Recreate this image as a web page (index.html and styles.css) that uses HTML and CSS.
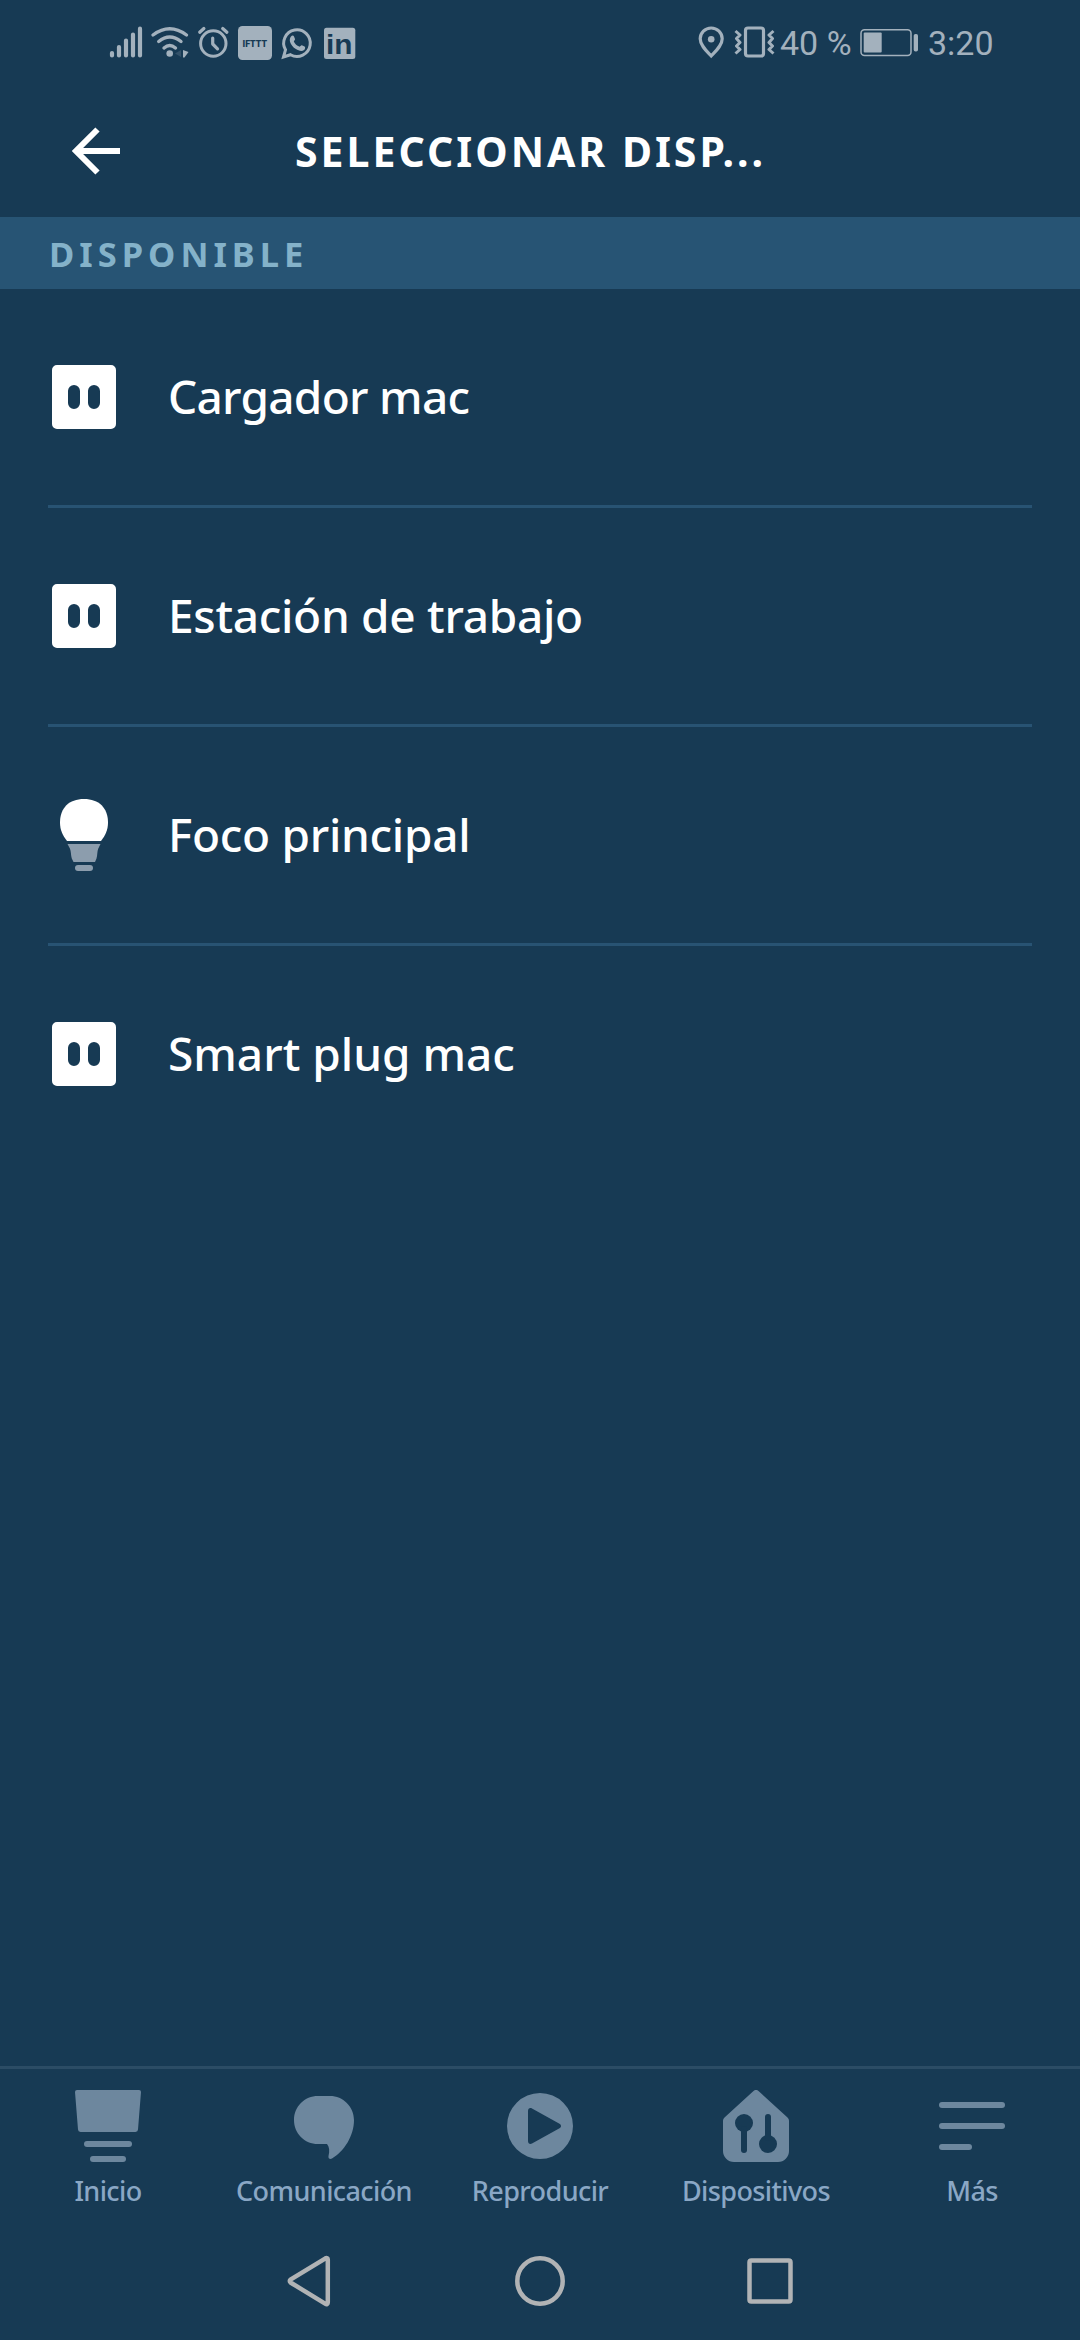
FILE: index.html
```html
<!DOCTYPE html>
<html lang="es">
<head>
<meta charset="utf-8">
<title>Seleccionar dispositivo</title>
<link rel="stylesheet" href="styles.css">
</head>
<body>
<div class="screen">
  <div class="status">
    <svg class="ic signal" width="34" height="34" viewBox="109 26 34 34"><path d="M112 53v2.500M119 47v8.500M126 40.500v15M133 34.500v21M140 28.700v26.800" fill="none" stroke="currentColor" stroke-width="4.200" stroke-linecap="round"/></svg>
    <svg class="ic wifi" width="39" height="34" viewBox="151 26 39 34"><g fill="none" stroke="currentColor" stroke-width="3.400" stroke-linecap="round"><path d="M153 35Q169.700 22.500 186.500 35M158.700 41.500Q169.700 32.500 181 41.500M164 48Q169.700 43 175.500 48"/></g><circle cx="169.700" cy="53.500" r="3.300" fill="currentColor"/><path d="M181 50v7l-6-3.500z" fill="currentColor" opacity=".2"/><path d="M183 50l5.500 2-4 5.500H183z" fill="currentColor"/></svg>
    <svg class="ic alarm" width="32" height="34" viewBox="197 26 32 34"><g fill="none" stroke="currentColor" stroke-width="3.200" stroke-linecap="round"><circle cx="213.300" cy="43.500" r="12.700" stroke-width="3"/><path d="M199.700 32.300l4.200-3.800M222.700 28.500l4.200 3.800"/><path d="M212.700 38v6l4.800 4.800" stroke-linejoin="round"/></g></svg>
    <svg class="ic ifttt" width="34" height="34" viewBox="238 26 34 34"><rect x="238" y="26" width="34" height="34" rx="4.500" fill="currentColor"/><text x="242.500" y="46.500" textLength="24.500" lengthAdjust="spacingAndGlyphs" class="ifttt-t">IFTTT</text></svg>
    <svg class="ic wa" width="32" height="34" viewBox="281 26 32 34"><path d="M283.500 57l2-7.200a13.300 13.300 0 1 1 5 4.900z" fill="none" stroke="currentColor" stroke-width="3"/><path d="M291 36.500c1-1.300 2.500-1.300 3 0l1 2.500c.3.900-1.400 2-1.100 2.700 1.100 2.300 3 3.900 5.300 4.900.9.300 1.800-1.800 2.700-1.400l2.700 1.300c1 .5.600 2.600-.5 3.500-2.300 1.800-5.600.7-8.200-.9-2.800-1.800-5.200-4.600-5.900-7.400-.5-2 0-3.900 1-5.200z" fill="currentColor"/></svg>
    <svg class="ic li" width="32" height="34" viewBox="324 26 32 34"><rect x="324" y="27.700" width="31.300" height="31.300" rx="2.500" fill="currentColor"/><text x="326" y="54" textLength="26.500" lengthAdjust="spacingAndGlyphs" class="li-t">in</text></svg>
    <span class="spacer"></span>
    <svg class="ic pin" width="27" height="34" viewBox="698 26 27 34"><path d="M711.200 56c-5-5.300-11-10.700-11-17.200a11 10.800 0 0 1 22 0c0 6.500-6 11.900-11 17.200z" fill="none" stroke="currentColor" stroke-width="3.200"/><circle cx="711.200" cy="39.300" r="3.300" fill="currentColor"/></svg>
    <svg class="ic vib" width="42" height="34" viewBox="734 26 42 34"><g fill="none" stroke="currentColor" stroke-linejoin="round"><rect x="745.500" y="28" width="18" height="28" rx="2.500" stroke-width="3.200"/><path d="M735.500 31l4.500 4-3.500 3.500 3.500 4-3.500 3.500 3.500 3.500-4.500 4M773.500 31l-4.500 4 3.500 3.500-3.500 4 3.500 3.500-3.500 3.500 4.500 4" stroke-width="3"/></g></svg>
    <span class="st pct">40 %</span>
    <svg class="ic bat" width="59" height="34" viewBox="860 26 59 34"><rect x="861" y="29.800" width="50" height="25.700" rx="3.500" fill="none" stroke="currentColor" stroke-width="1.500"/><rect x="863.700" y="32.500" width="18" height="20" rx="1" fill="currentColor"/><rect x="913.700" y="34" width="4.300" height="17.500" rx="1.800" fill="currentColor"/></svg>
    <span class="st clock">3:20</span>
  </div>
  <header class="header">
    <svg class="back" width="50" height="50" viewBox="71 126 50 50"><path d="M97.500 129.500L76 151l21.500 21.500M75 151h45" fill="none" stroke="#fff" stroke-width="6"/></svg>
    <h1 class="title">SELECCIONAR DISP...</h1>
  </header>
  <h2 class="section">DISPONIBLE</h2>
  <ul class="list">
    <li class="row"><svg class="dev" width="64" height="72" viewBox="0 0 64 72"><path fill-rule="evenodd" d="M5 4h54a5 5 0 0 1 5 5v54a5 5 0 0 1-5 5H5a5 5 0 0 1-5-5V9a5 5 0 0 1 5-5zM22 24a6 6 0 0 0-6 6v12a6 6 0 0 0 12 0V30a6 6 0 0 0-6-6zM42 24a6 6 0 0 0-6 6v12a6 6 0 0 0 12 0V30a6 6 0 0 0-6-6z" fill="#fff"/></svg><span class="name tight">Cargador mac</span></li>
    <li class="row"><svg class="dev" width="64" height="72" viewBox="0 0 64 72"><path fill-rule="evenodd" d="M5 4h54a5 5 0 0 1 5 5v54a5 5 0 0 1-5 5H5a5 5 0 0 1-5-5V9a5 5 0 0 1 5-5zM22 24a6 6 0 0 0-6 6v12a6 6 0 0 0 12 0V30a6 6 0 0 0-6-6zM42 24a6 6 0 0 0-6 6v12a6 6 0 0 0 12 0V30a6 6 0 0 0-6-6z" fill="#fff"/></svg><span class="name snug">Estación de trabajo</span></li>
    <li class="row"><svg class="dev" width="64" height="72" viewBox="0 0 64 72"><path d="M15 42C10.500 36 8 31 8 23.500 8 9 17 0 32 0s24 9 24 23.500C56 31 53.500 36 49 42z" fill="#fff"/><path d="M15.500 45h33l-2.200 4.500c-1.200 3-.8 6.500-1.800 10L43 63H21.500l-1.700-3.500c-1-3.500-.7-7-1.900-10z" fill="#8c9dad"/><rect x="23" y="66" width="18" height="6" rx="3" fill="#8c9dad"/></svg><span class="name snug">Foco principal</span></li>
    <li class="row"><svg class="dev" width="64" height="72" viewBox="0 0 64 72"><path fill-rule="evenodd" d="M5 4h54a5 5 0 0 1 5 5v54a5 5 0 0 1-5 5H5a5 5 0 0 1-5-5V9a5 5 0 0 1 5-5zM22 24a6 6 0 0 0-6 6v12a6 6 0 0 0 12 0V30a6 6 0 0 0-6-6zM42 24a6 6 0 0 0-6 6v12a6 6 0 0 0 12 0V30a6 6 0 0 0-6-6z" fill="#fff"/></svg><span class="name">Smart plug mac</span></li>
  </ul>
  <nav class="tabs">
    <a class="tab"><svg width="72" height="72" viewBox="0 0 72 72" fill="currentColor"><path d="M5 0h62a2 2 0 0 1 2 2l-3 37.500a2.600 2.600 0 0 1-2.500 2.500h-55A2.600 2.600 0 0 1 6 39.500L3 2a2 2 0 0 1 2-2z"/><rect x="12" y="51" width="48" height="6" rx="3"/><rect x="18" y="66" width="36" height="6" rx="3"/></svg><span>Inicio</span></a>
    <a class="tab"><svg width="72" height="72" viewBox="0 0 72 72" fill="currentColor"><path d="M30 6h12c13 0 24 10.500 24 24 0 16-10 31.500-22 38.500-2 1.200-4 0-3.500-2.500 1.200-5 1-9-1.500-12h-9C16.500 54 6 43.500 6 30S16.500 6 30 6z"/></svg><span>Comunicación</span></a>
    <a class="tab"><svg width="72" height="72" viewBox="0 0 72 72" fill="currentColor"><path fill-rule="evenodd" d="M36 3a33 33 0 1 0 0 66 33 33 0 0 0 0-66zM24 21c0-2.500 2-3.700 4-2.500l27.500 15.200c2 1.100 2 3.500 0 4.600L28 53.500c-2 1.200-4 0-4-2.500z"/></svg><span>Reproducir</span></a>
    <a class="tab"><svg width="72" height="72" viewBox="0 0 72 72"><path d="M33.500 1a3.600 3.600 0 0 1 5 0L67.500 27.500a4.500 4.500 0 0 1 1.500 3.500v30a11 11 0 0 1-11 11H14A11 11 0 0 1 3 61V31a4.500 4.500 0 0 1 1.500-3.500z" fill="currentColor"/><g class="cut"><circle cx="24" cy="33" r="9"/><rect x="21" y="36" width="6" height="27" rx="3"/><circle cx="48" cy="54" r="9"/><rect x="45" y="24" width="6" height="27" rx="3"/></g></svg><span>Dispositivos</span></a>
    <a class="tab"><svg width="72" height="72" viewBox="0 0 72 72" fill="currentColor"><rect x="3" y="12" width="66" height="6" rx="3"/><rect x="3" y="33" width="66" height="6" rx="3"/><rect x="3" y="54" width="33" height="6" rx="3"/></svg><span>Más</span></a>
  </nav>
  <div class="sysnav">
    <svg width="50" height="52" viewBox="285 2255 50 52"><path d="M325.500 2258.300c1.200-.7 2.300 0 2.300 1.300v43c0 1.300-1.100 2-2.300 1.300l-35-21.400c-1-.7-1-2.100 0-2.800z"/></svg>
    <svg width="52" height="52" viewBox="514 2255 52 52"><circle cx="540" cy="2281" r="22.700"/></svg>
    <svg width="52" height="52" viewBox="743 2255 52 52"><rect x="748.500" y="2260.500" width="41" height="41" rx="1.800"/></svg>
  </div>
</div>
</body>
</html>
```
FILE: styles.css
```css
* { box-sizing: border-box; }
body { margin: 0; background: #173a54; font-family: "Noto Sans", "Open Sans", sans-serif; color: #fff; }
.screen { display: flex; flex-direction: column; width: 1080px; height: 2340px; }

.status { display: flex; height: 84px; padding: 26px 0 0 109px; color: #a3b1bd; flex: none; }
.ic { display: block; flex: none; overflow: visible; }
.wifi { margin-left: 8px; }
.alarm { margin-left: 7px; }
.ifttt { margin-left: 9px; }
.wa { margin-left: 9px; }
.li { margin-left: 11px; }
.ifttt-t { font: 900 8.5px Roboto, sans-serif; fill: #173a54; }
.li-t { font: 700 28px "Liberation Sans", sans-serif; fill: #173a54; }
.spacer { width: 342px; flex: none; }
.vib { margin-left: 9px; }
.st { font: 400 34px/34px Roboto, sans-serif; white-space: nowrap; flex: none; }
.pct { width: 72px; margin-left: 4px; }
.bat { margin-left: 8px; }
.clock { margin-left: 9px; }

.header { display: flex; height: 133px; padding: 42px 0 0 71px; flex: none; }
.back { flex: none; }
.title { margin: -3px 0 0 174px; font-size: 41px; line-height: 56px; font-weight: 700; letter-spacing: 3px; white-space: nowrap; }
.section { margin: 0; flex: none; height: 72px; padding: 13px 0 0 49px; background: #275474; color: #84b2c9; font-size: 34.5px; line-height: 47px; font-weight: 700; letter-spacing: 5px; }

.list { margin: 0; padding: 0 48px; list-style: none; flex: none; }
.row { display: flex; align-items: center; height: 219px; padding-left: 4px; border-bottom: 3px solid #285373; }
.row:last-child { border-bottom-color: transparent; }
.dev { flex: none; }
.name { margin-left: 52px; padding-bottom: 2px; font-size: 46px; line-height: 60px; font-weight: 500; white-space: nowrap; }
.tight { letter-spacing: -0.7px; }
.snug { letter-spacing: -0.3px; }

.tabs { display: grid; grid-template-columns: repeat(5, 216px); margin-top: auto; height: 165px; border-top: 3px solid #2b4c65; padding-top: 21px; flex: none; color: #6d879e; }
.tab { display: flex; flex-direction: column; align-items: center; }
.tab span { margin-top: 10px; color: #8aa7c5; font-size: 27px; line-height: 38px; font-weight: 500; letter-spacing: -0.6px; white-space: nowrap; }
.cut { fill: #173a54; }

.sysnav { display: flex; height: 109px; padding: 24px 0 0 285px; flex: none; gap: 178px; }
.sysnav svg { flex: none; fill: none; stroke: #b1b3b5; stroke-width: 4.5px; }
.sysnav svg:first-child { margin-right: 1px; }
```
